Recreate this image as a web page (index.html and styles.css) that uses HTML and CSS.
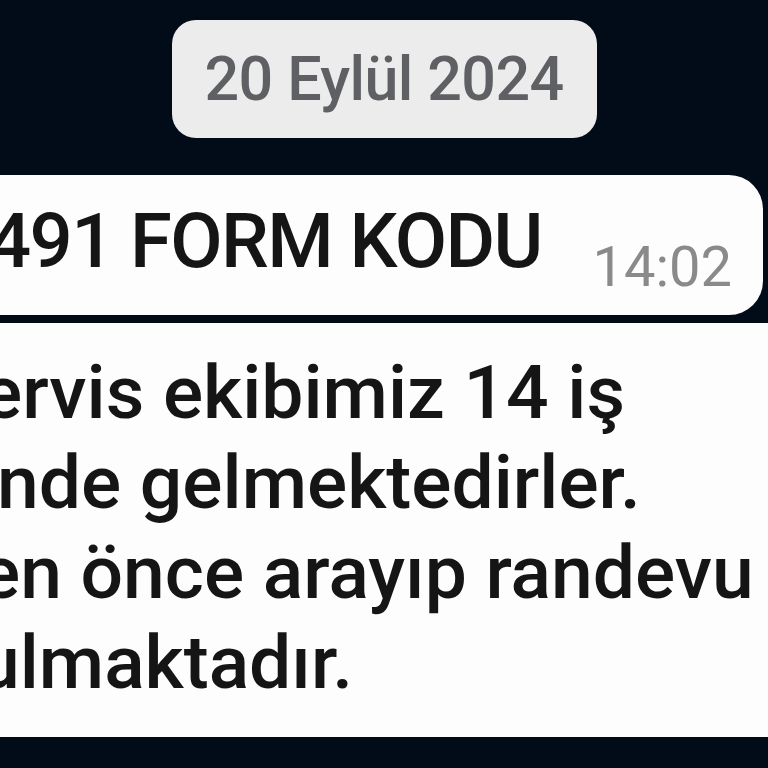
FILE: index.html
```html
<!DOCTYPE html>
<html lang="tr">
<head>
<meta charset="utf-8">
<link rel="stylesheet" href="styles.css">
</head>
<body>
<div class="screen">
  <div class="date-row"><div class="date-pill">20 Eylül 2024</div></div>
  <div class="bubble bubble-short">
    <span class="msg-title">491 FORM KODU</span>
    <span class="time">14:02</span>
  </div>
  <div class="bubble bubble-long">
    <div class="line l1">ervis ekibimiz 14 iş</div>
    <div class="line l2">nde gelmektedirler.</div>
    <div class="line l3">en önce arayıp randevu</div>
    <div class="line l4"><span>ulmaktadır.</span><span class="time time-cut">14:02</span></div>
  </div>
</div>
</body>
</html>
```
FILE: styles.css
```css
html, body {
  margin: 0;
  padding: 0;
  background: #020b18;
}
.screen {
  width: 768px;
  height: 768px;
  overflow: hidden;
  background: #020b18;
  font-family: Roboto, "Noto Sans", sans-serif;
  display: flex;
  flex-direction: column;
}
.date-row {
  display: flex;
  justify-content: center;
  padding-top: 20px;
}
.date-pill {
  width: 425px;
  height: 118px;
  border-radius: 24px;
  background: #ececec;
  color: #5e6063;
  font-size: 61px;
  font-weight: 480;
  letter-spacing: -0.6px;
  display: flex;
  align-items: center;
  justify-content: center;
}
.bubble {
  background: #fdfdfd;
  color: #151515;
}
.bubble-short {
  margin-top: 37px;
  width: 763px;
  height: 140px;
  border-radius: 0 34px 34px 0;
  display: flex;
  align-items: flex-start;
  justify-content: space-between;
  box-sizing: border-box;
  padding-right: 31px;
  overflow: hidden;
}
.msg-title {
  font-size: 76px;
  font-weight: 480;
  letter-spacing: -1.6px;
  line-height: 1;
  margin-top: 28px;
  margin-left: -12px;
  white-space: nowrap;
}
.time {
  color: #8a8a8a;
  font-size: 56px;
  line-height: 1;
  margin-top: 64px;
}
.bubble-long {
  margin-top: 8px;
  height: 414px;
  width: 768px;
  box-sizing: border-box;
  padding-top: 24px;
  overflow: hidden;
}
.line {
  font-size: 75px;
  font-weight: 480;
  line-height: 90px;
  white-space: nowrap;
}
.l1 { margin-left: -18px; }
.l2 { margin-left: -3px; }
.l3 { margin-left: -20px; }
.l4 { margin-left: -22px; display: flex; }
.time-cut {
  margin-left: 420px;
  margin-top: 20px;
}
```
